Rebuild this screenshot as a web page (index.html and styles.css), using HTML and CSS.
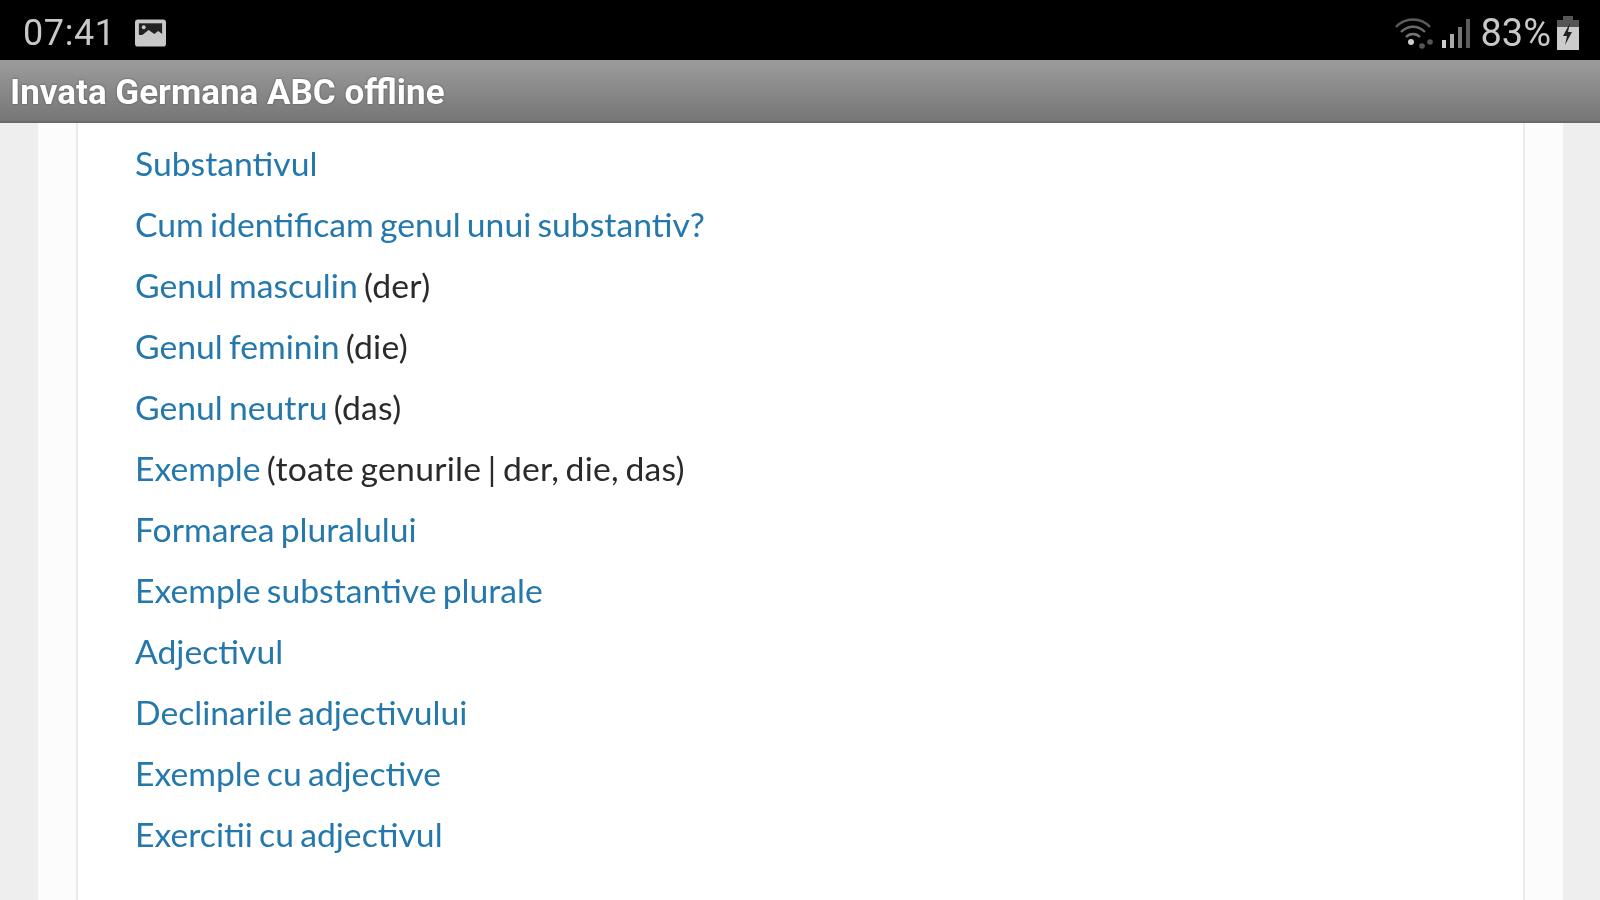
FILE: index.html
```html
<!DOCTYPE html>
<html lang="en">
<head>
    <meta charset="UTF-8">
    <title>Invata Germana ABC offline</title>
    <link rel="stylesheet" href="styles.css">
</head>
<body>
    <div class="status-bar">
        <div class="status-left">
            <span class="clock">07:41</span>
            <svg class="icon-picture" width="31" height="30" viewBox="0 0 32 30">
                <rect x="0" y="1" width="32" height="28" rx="3" fill="#c8c8c8"/>
                <rect x="4" y="5" width="24" height="12" fill="#222"/>
                <circle cx="9" cy="9" r="2" fill="#c8c8c8"/>
                <path d="M4 20 L14 12 L20 16 L24 13 L28 16 V24 H4 Z" fill="#c8c8c8"/>
            </svg>
        </div>
        <div class="status-right">
            <svg class="icon-wifi" width="40" height="32" viewBox="0 0 40 32">
                <path d="M1 10 C10 0 26 0 35 10" fill="none" stroke="#5c5c5c" stroke-width="2.4"/>
                <path d="M6 15 C13 8 23 8 30 15" fill="none" stroke="#6a6a6a" stroke-width="2.4"/>
                <path d="M11 20 C15 16 21 16 25 20" fill="none" stroke="#777" stroke-width="2.4"/>
                <circle cx="16" cy="25" r="3" fill="#ccc"/>
                <circle cx="27" cy="29" r="2.8" fill="#555"/>
                <circle cx="35" cy="25" r="2.8" fill="#555"/>
            </svg>
            <svg class="icon-signal" width="30" height="32" viewBox="0 0 30 32">
                <rect x="1" y="23" width="4" height="8" fill="#ccc"/>
                <rect x="9" y="17" width="4" height="14" fill="#aaa"/>
                <rect x="17" y="10" width="4" height="21" fill="#777"/>
                <rect x="25" y="2" width="4" height="29" fill="#5c5c5c"/>
            </svg>
            <span class="battery-text">83%</span>
            <svg class="icon-battery" width="24" height="34" viewBox="0 0 24 34">
                <rect x="7" y="0" width="10" height="5" fill="#555"/>
                <rect x="1" y="4" width="22" height="8" fill="#555"/>
                <rect x="1" y="11" width="22" height="23" fill="#ccc"/>
                <path d="M14 7 L7 20 H11 L9 29 L16 16 H12 Z" fill="#222"/>
            </svg>
        </div>
    </div>

    <div class="app-bar">
        <h1>Invata Germana ABC offline</h1>
    </div>

    <div class="page">
        <div class="page-inner">
            <ul class="topic-list">
                <li><a href="#">Substantivul</a></li>
                <li><a href="#">Cum identificam genul unui substantiv?</a></li>
                <li><a href="#">Genul masculin</a> <span class="note">(der)</span></li>
                <li><a href="#">Genul feminin</a> <span class="note">(die)</span></li>
                <li><a href="#">Genul neutru</a> <span class="note">(das)</span></li>
                <li><a href="#">Exemple</a> <span class="note">(toate genurile | der, die, das)</span></li>
                <li><a href="#">Formarea pluralului</a></li>
                <li><a href="#">Exemple substantive plurale</a></li>
                <li><a href="#">Adjectivul</a></li>
                <li><a href="#">Declinarile adjectivului</a></li>
                <li><a href="#">Exemple cu adjective</a></li>
                <li><a href="#">Exercitii cu adjectivul</a></li>
            </ul>
        </div>
    </div>
</body>
</html>
```

FILE: styles.css
```css
* {
    margin: 0;
    padding: 0;
    box-sizing: border-box;
}

html,
body {
    height: 100%;
    overflow: hidden;
}

body {
    font-family: Lato, "Open Sans", sans-serif;
    background: #eeeeee;
    display: flex;
    flex-direction: column;
}

.status-left,
.status-right,
.app-bar h1,
.topic-list {
    filter: blur(0.7px);
}

.status-bar {
    height: 60px;
    flex: none;
    background: #000;
    color: #c8c8c8;
    font-family: Roboto, sans-serif;
    display: flex;
    justify-content: space-between;
    align-items: center;
    padding: 5px 20px 0 23px;
}

.status-left,
.status-right {
    display: flex;
    align-items: center;
}

.clock {
    font-size: 36px;
    letter-spacing: 0.6px;
}

.icon-picture {
    margin-left: 19px;
}

.icon-signal {
    margin-left: 6px;
}

.battery-text {
    font-size: 38px;
    margin-left: 9px;
}

.icon-battery {
    margin-left: 5px;
}

.app-bar {
    height: 63px;
    flex: none;
    background: linear-gradient(#9c9c9c, #767676);
    border-bottom: 2px solid #6a6a6a;
    display: flex;
    align-items: center;
    padding: 4px 0 0 10px;
}

.app-bar h1 {
    font-family: Roboto, sans-serif;
    font-size: 35px;
    font-weight: 700;
    color: #fff;
    text-shadow: 0 0 2px #444;
}

.page {
    flex: 1;
    margin: 0 37px 0 38px;
    padding: 0 38px;
    background: #fcfcfc;
}

.page-inner {
    height: 100%;
    background: #fff;
    border-left: 2px solid #eaeaea;
    border-right: 2px solid #eaeaea;
    padding: 10px 0 0 57px;
}

.topic-list {
    list-style: none;
}

.topic-list li {
    height: 61px;
    line-height: 61px;
    font-size: 33.7px;
    word-spacing: -2.4px;
    color: #2a2a2a;
}

.topic-list a {
    color: #2478ab;
    text-decoration: none;
}

.note {
    letter-spacing: 0.25px;
}
```
